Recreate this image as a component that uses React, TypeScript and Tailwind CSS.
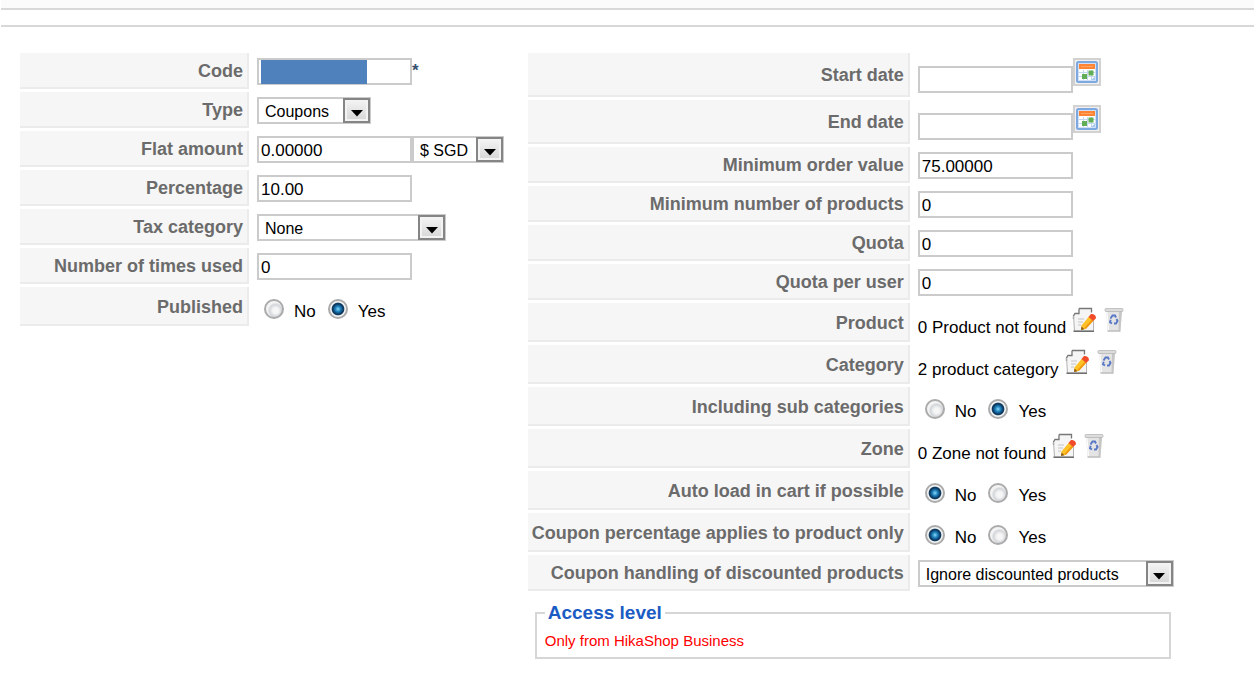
import type { ReactNode } from "react"
import clsx from "clsx"

interface RowProps {
  label: string
  htmlFor?: string
  size?: "sm" | "md" | "lg"
  children: ReactNode
}

function Row({ label, htmlFor, size = "sm", children }: RowProps) {
  const labelClass =
    "flex h-full shrink-0 items-center justify-end border-b-2 border-r-2 border-[#ebebeb] bg-[#f6f6f6] pt-[2px] pr-1 text-right text-[18px] leading-5 font-bold text-[#6b6b6b]"

  return (
    <div
      className={clsx(
        "grid grid-cols-[var(--label)_1fr] items-center gap-x-2",
        size === "sm" && "h-9",
        size === "md" && "h-[39px]",
        size === "lg" && "h-11"
      )}
    >
      {htmlFor ? (
        <label htmlFor={htmlFor} className={labelClass}>
          {label}
        </label>
      ) : (
        <div className={labelClass}>{label}</div>
      )}
      <div className="flex min-w-0 items-center">{children}</div>
    </div>
  )
}

function TextField({ id, value = "" }: { id: string; value?: string }) {
  return (
    <input
      id={id}
      type="text"
      defaultValue={value}
      className="h-[27px] w-[155px] border-2 border-[#cbcbcb] bg-white px-[2px] pt-[3px] text-[17px] leading-5 text-black outline-none"
    />
  )
}

interface SelectFieldProps {
  id: string
  options: string[]
  width: string
  label?: string
}

function SelectField({ id, options, width, label }: SelectFieldProps) {
  return (
    <div className={clsx("relative h-[27px]", width)}>
      <select
        id={id}
        aria-label={label}
        className="h-full w-full appearance-none border-2 border-[#cbcbcb] bg-white pt-[3px] pl-[6px] text-[16px] leading-5 text-black outline-none"
      >
        {options.map((option) => (
          <option key={option}>{option}</option>
        ))}
      </select>
      <span className="pointer-events-none absolute top-px right-px flex h-[25px] w-[27px] items-center justify-center border-2 border-[#858585] bg-gradient-to-b from-[#f4f4f4] to-[#d6d6d6] shadow-[inset_0_0_0_2px_#f3f3f3]">
        <svg width="12" height="7" viewBox="0 0 12 7" className="mt-[6px]">
          <path d="M0 0h12L6 6.5z" fill="#000" />
        </svg>
      </span>
    </div>
  )
}

function YesNo({ name, value }: { name: string; value: "No" | "Yes" }) {
  return (
    <div className="flex items-end gap-3 pt-2 pl-[7px] text-[17px] leading-5">
      {["No", "Yes"].map((option) => (
        <label key={option} className="flex items-start gap-[10px]">
          <input
            type="radio"
            name={name}
            defaultChecked={option === value}
            className="size-5 appearance-none rounded-full border-2 border-[#ababab] bg-[radial-gradient(circle_at_60%_60%,#f6f6f6_0_20%,#d3d6da_45%,#f4f4f4_60%)] checked:bg-[radial-gradient(circle,#8fd6f6_0,#2388c2_22%,#0a3c68_44%,#123a5c_52%,#f4f4f4_60%)]"
          />
          <span className="pt-[3px]">{option}</span>
        </label>
      ))}
    </div>
  )
}

function CalendarButton({ label }: { label: string }) {
  return (
    <button
      type="button"
      aria-label={label}
      className="mb-[7px] flex size-7 items-center justify-center border-2 border-[#d2d2d2] bg-[#f0f0f0]"
    >
      <svg width="22" height="22" viewBox="0 0 22 22" className="shrink-0">
        <rect x="1" y="1" width="20" height="20" rx="1.5" fill="#cfe0f7" stroke="#7ea8e0" strokeWidth="2" />
        <rect x="3" y="4" width="16" height="15" fill="#fff" />
        <rect x="3" y="3" width="16" height="5" fill="#ff8534" />
        <path d="M5 5.5h12" stroke="#ffa561" />
        <path d="M3 11.5h16M3 15.5h16M7.5 9v10M11.5 9v10M15.5 9v10" stroke="#c3d8ef" />
        <rect x="6" y="13" width="5" height="5" fill="#62ae57" />
        <rect x="12.500" y="9.500" width="5" height="5" fill="#62ae57" />
        <path d="M19 15.5V19h-4z" fill="#a9c8f0" />
      </svg>
    </button>
  )
}

function DateField({ id, label }: { id: string; label: string }) {
  return (
    <div className="flex items-end">
      <TextField id={id} />
      <CalendarButton label={label} />
    </div>
  )
}

function EditIcon() {
  return (
    <svg width="24" height="26" viewBox="0 0 24 26">
      <path d="M7 1.5h12.5v6l2.5 2V24.500H1.500v-17H5z" fill="#f5f5f5" />
      <path d="M7 1.500h12.500v4M7 1.500v5H3L1.500 9v3" fill="none" stroke="#777" strokeWidth="1.300" />
      <path d="M1.500 9l1 14.500M21.500 14v9.500" fill="none" stroke="#b5b5b5" />
      <path d="M1.500 24.200h20.500" stroke="#6e6e6e" strokeWidth="1.600" />
      <path d="M6 12h6M6 15h5M6 18h3" stroke="#c4c4c4" />
      <path d="M9.500 18.500L17 9.500l4.500 4-7.500 8.300-5 1.200z" fill="#ffc125" />
      <path d="M12.500 21l7.500-8.500 1.500 1-7.500 8.300z" fill="#f0960f" />
      <path d="M9.500 19.500L9 23l3.500-.8z" fill="#8a5a1c" />
      <path d="M16.500 10l2-2.500c2-1.500 6.500 1 5.200 4l-2.500 2.500z" fill="#f04c2c" />
    </svg>
  )
}

function TrashIcon() {
  return (
    <svg width="20" height="26" viewBox="0 0 20 26">
      <path d="M2 3h16l-1.500 20.500h-13z" fill="#e4e4e4" />
      <path d="M15 4h3l-1.500 19.500h-2z" fill="#c6c6c6" />
      <path d="M3 5l1.500 18.500" stroke="#fff" />
      <rect x="1" y="1.500" width="18" height="3" rx="1" fill="#dcdcdc" stroke="#b0b0b0" strokeWidth=".7" />
      <path d="M3.500 24h13" stroke="#b0b0b0" strokeWidth="1.300" />
      <path d="M6.500 11.500l2-3h2.500l1 2M12.500 12l1 2-1.500 2.500h-2M8 16.500l-2-1.200.7-2.500" fill="none" stroke="#5877c5" strokeWidth="1.900" />
    </svg>
  )
}

function PickerField({ text }: { text: string }) {
  return (
    <div className="flex items-baseline text-[17px] leading-5">
      <span>{text}</span>
      <button type="button" aria-label="Edit" className="ml-[6px]">
        <EditIcon />
      </button>
      <button type="button" aria-label="Delete" className="ml-2">
        <TrashIcon />
      </button>
    </div>
  )
}

export default function App() {
  return (
    <div className="min-h-screen bg-white font-['Liberation_Sans',Arial,sans-serif] text-black">
      <header className="ml-px">
        <div className="h-[10px] border-b-2 border-[#d8d8d8] bg-[#fbfbfb]" />
        <div className="h-[17px] border-b-2 border-[#d8d8d8]" />
      </header>

      <form className="grid grid-cols-[11fr_14fr] items-start pt-[26px] pr-20 pl-5">
        <section className="flex flex-col gap-[3px] [--label:229px]">
          <Row label="Code" htmlFor="code">
            <div className="relative">
              <TextField id="code" />
              <span className="absolute top-[2px] left-1 h-6 w-[106px] bg-[#4f81bd]" />
            </div>
            <span className="text-[17px] leading-5 font-bold text-[#35506e]">*</span>
          </Row>
          <Row label="Type" htmlFor="type">
            <SelectField id="type" options={["Coupons", "Discounts"]} width="w-[114px]" />
          </Row>
          <Row label="Flat amount" htmlFor="flat">
            <TextField id="flat" value="0.00000" />
            <SelectField id="currency" label="Currency" options={["$ SGD"]} width="w-[92px]" />
          </Row>
          <Row label="Percentage" htmlFor="percentage">
            <TextField id="percentage" value="10.00" />
          </Row>
          <Row label="Tax category" htmlFor="tax">
            <SelectField id="tax" options={["None"]} width="w-[189px]" />
          </Row>
          <Row label="Number of times used" htmlFor="used">
            <TextField id="used" value="0" />
          </Row>
          <Row label="Published" size="md">
            <YesNo name="published" value="Yes" />
          </Row>
        </section>

        <section>
          <div className="flex flex-col gap-[3px] [--label:382px]">
            <Row label="Start date" htmlFor="start" size="lg">
              <DateField id="start" label="Pick start date" />
            </Row>
            <Row label="End date" htmlFor="end" size="lg">
              <DateField id="end" label="Pick end date" />
            </Row>
            <Row label="Minimum order value" htmlFor="min-order">
              <TextField id="min-order" value="75.00000" />
            </Row>
            <Row label="Minimum number of products" htmlFor="min-products">
              <TextField id="min-products" value="0" />
            </Row>
            <Row label="Quota" htmlFor="quota">
              <TextField id="quota" value="0" />
            </Row>
            <Row label="Quota per user" htmlFor="quota-user">
              <TextField id="quota-user" value="0" />
            </Row>
            <Row label="Product" size="md">
              <PickerField text="0 Product not found" />
            </Row>
            <Row label="Category" size="md">
              <PickerField text="2 product category" />
            </Row>
            <Row label="Including sub categories" size="md">
              <YesNo name="sub-categories" value="Yes" />
            </Row>
            <Row label="Zone" size="md">
              <PickerField text="0 Zone not found" />
            </Row>
            <Row label="Auto load in cart if possible" size="md">
              <YesNo name="auto-load" value="No" />
            </Row>
            <Row label="Coupon percentage applies to product only" size="md">
              <YesNo name="product-only" value="No" />
            </Row>
            <Row label="Coupon handling of discounted products" htmlFor="handling">
              <SelectField id="handling" options={["Ignore discounted products"]} width="w-[256px]" />
            </Row>
          </div>

          <fieldset className="mt-[10px] mr-[3px] ml-[7px] border-2 border-[#d6d6d6] px-2 py-[6px]">
            <legend className="px-[3px] text-[19px] leading-6 font-bold text-[#1a5bc4]">Access level</legend>
            <p className="text-[15px] leading-5 text-[#ff0000]">Only from HikaShop Business</p>
          </fieldset>
        </section>
      </form>
    </div>
  )
}
